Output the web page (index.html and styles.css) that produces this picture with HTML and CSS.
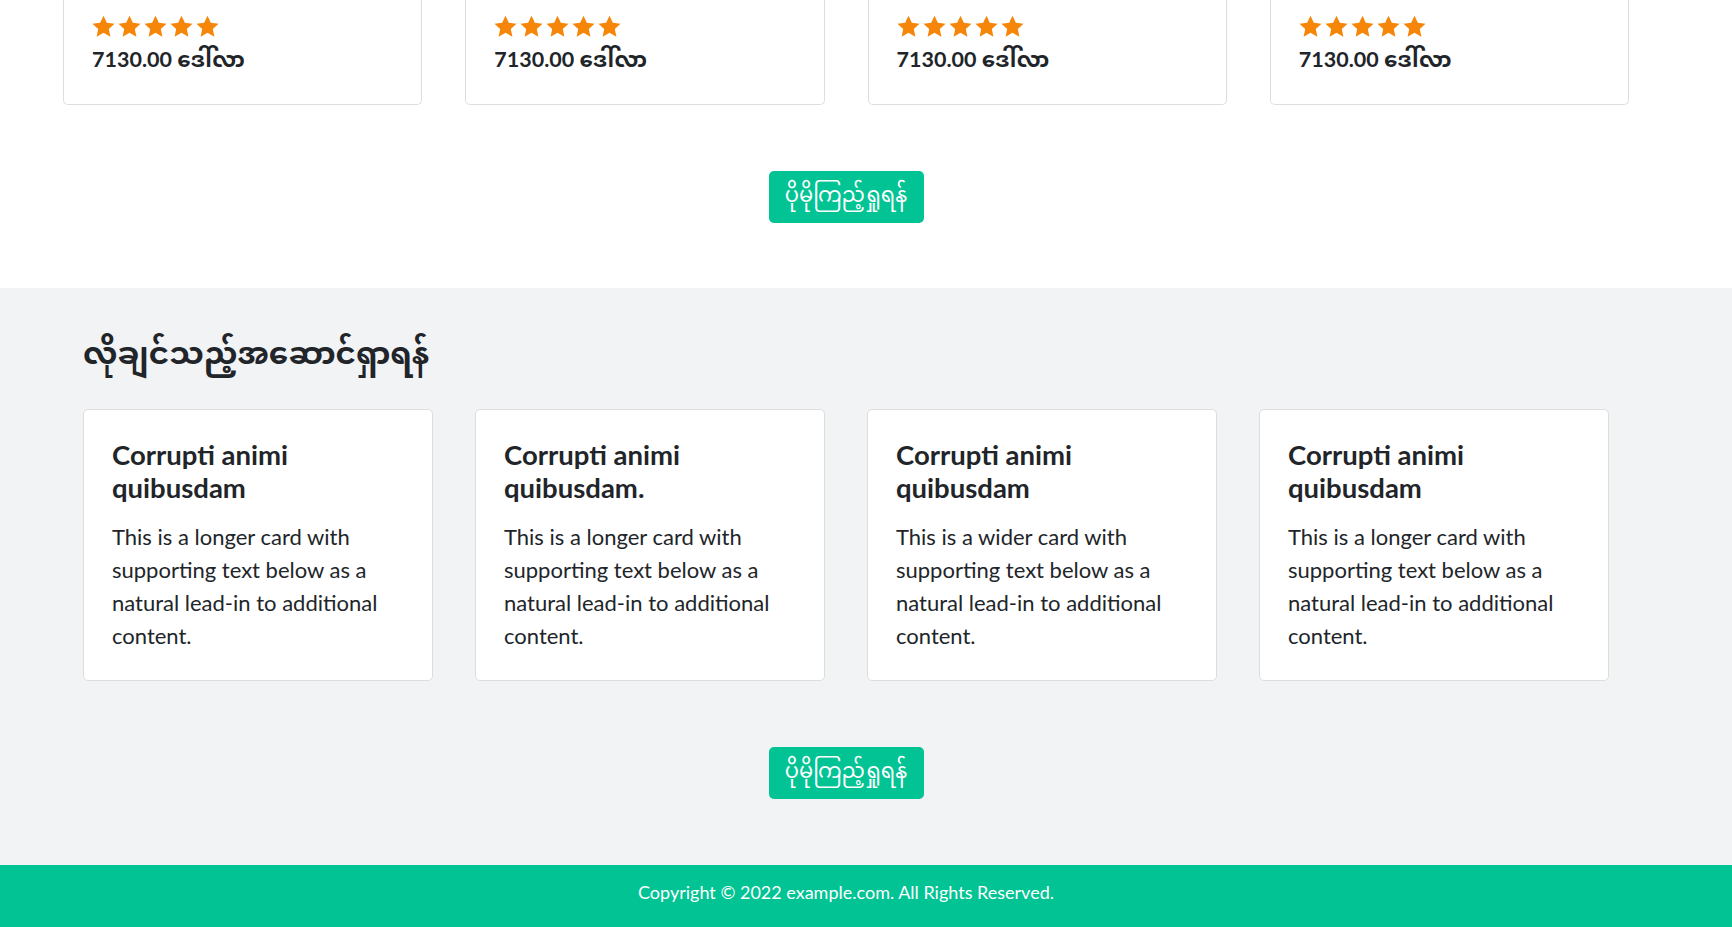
FILE: index.html
```html
<!DOCTYPE html>
<html lang="my">
<head>
<meta charset="utf-8">
<title>Products</title>
<link rel="stylesheet" href="styles.css">
</head>
<body>
<section class="products">
  <div class="product-row">
    <div class="product-card">
      <div class="stars">
        <svg viewBox="0 0 24 24"><path d="M12 1.6l3.2 6.9 7.4.8-5.5 5.1 1.5 7.4L12 18l-6.6 3.8 1.5-7.4-5.5-5.1 7.4-.8z"/></svg>
        <svg viewBox="0 0 24 24"><path d="M12 1.6l3.2 6.9 7.4.8-5.5 5.1 1.5 7.4L12 18l-6.6 3.8 1.5-7.4-5.5-5.1 7.4-.8z"/></svg>
        <svg viewBox="0 0 24 24"><path d="M12 1.6l3.2 6.9 7.4.8-5.5 5.1 1.5 7.4L12 18l-6.6 3.8 1.5-7.4-5.5-5.1 7.4-.8z"/></svg>
        <svg viewBox="0 0 24 24"><path d="M12 1.6l3.2 6.9 7.4.8-5.5 5.1 1.5 7.4L12 18l-6.6 3.8 1.5-7.4-5.5-5.1 7.4-.8z"/></svg>
        <svg viewBox="0 0 24 24"><path d="M12 1.6l3.2 6.9 7.4.8-5.5 5.1 1.5 7.4L12 18l-6.6 3.8 1.5-7.4-5.5-5.1 7.4-.8z"/></svg>
      </div>
      <p class="price">7130.00 ဒေါ်လာ</p>
    </div>
    <div class="product-card">
      <div class="stars">
        <svg viewBox="0 0 24 24"><path d="M12 1.6l3.2 6.9 7.4.8-5.5 5.1 1.5 7.4L12 18l-6.6 3.8 1.5-7.4-5.5-5.1 7.4-.8z"/></svg>
        <svg viewBox="0 0 24 24"><path d="M12 1.6l3.2 6.9 7.4.8-5.5 5.1 1.5 7.4L12 18l-6.6 3.8 1.5-7.4-5.5-5.1 7.4-.8z"/></svg>
        <svg viewBox="0 0 24 24"><path d="M12 1.6l3.2 6.9 7.4.8-5.5 5.1 1.5 7.4L12 18l-6.6 3.8 1.5-7.4-5.5-5.1 7.4-.8z"/></svg>
        <svg viewBox="0 0 24 24"><path d="M12 1.6l3.2 6.9 7.4.8-5.5 5.1 1.5 7.4L12 18l-6.6 3.8 1.5-7.4-5.5-5.1 7.4-.8z"/></svg>
        <svg viewBox="0 0 24 24"><path d="M12 1.6l3.2 6.9 7.4.8-5.5 5.1 1.5 7.4L12 18l-6.6 3.8 1.5-7.4-5.5-5.1 7.4-.8z"/></svg>
      </div>
      <p class="price">7130.00 ဒေါ်လာ</p>
    </div>
    <div class="product-card">
      <div class="stars">
        <svg viewBox="0 0 24 24"><path d="M12 1.6l3.2 6.9 7.4.8-5.5 5.1 1.5 7.4L12 18l-6.6 3.8 1.5-7.4-5.5-5.1 7.4-.8z"/></svg>
        <svg viewBox="0 0 24 24"><path d="M12 1.6l3.2 6.9 7.4.8-5.5 5.1 1.5 7.4L12 18l-6.6 3.8 1.5-7.4-5.5-5.1 7.4-.8z"/></svg>
        <svg viewBox="0 0 24 24"><path d="M12 1.6l3.2 6.9 7.4.8-5.5 5.1 1.5 7.4L12 18l-6.6 3.8 1.5-7.4-5.5-5.1 7.4-.8z"/></svg>
        <svg viewBox="0 0 24 24"><path d="M12 1.6l3.2 6.9 7.4.8-5.5 5.1 1.5 7.4L12 18l-6.6 3.8 1.5-7.4-5.5-5.1 7.4-.8z"/></svg>
        <svg viewBox="0 0 24 24"><path d="M12 1.6l3.2 6.9 7.4.8-5.5 5.1 1.5 7.4L12 18l-6.6 3.8 1.5-7.4-5.5-5.1 7.4-.8z"/></svg>
      </div>
      <p class="price">7130.00 ဒေါ်လာ</p>
    </div>
    <div class="product-card">
      <div class="stars">
        <svg viewBox="0 0 24 24"><path d="M12 1.6l3.2 6.9 7.4.8-5.5 5.1 1.5 7.4L12 18l-6.6 3.8 1.5-7.4-5.5-5.1 7.4-.8z"/></svg>
        <svg viewBox="0 0 24 24"><path d="M12 1.6l3.2 6.9 7.4.8-5.5 5.1 1.5 7.4L12 18l-6.6 3.8 1.5-7.4-5.5-5.1 7.4-.8z"/></svg>
        <svg viewBox="0 0 24 24"><path d="M12 1.6l3.2 6.9 7.4.8-5.5 5.1 1.5 7.4L12 18l-6.6 3.8 1.5-7.4-5.5-5.1 7.4-.8z"/></svg>
        <svg viewBox="0 0 24 24"><path d="M12 1.6l3.2 6.9 7.4.8-5.5 5.1 1.5 7.4L12 18l-6.6 3.8 1.5-7.4-5.5-5.1 7.4-.8z"/></svg>
        <svg viewBox="0 0 24 24"><path d="M12 1.6l3.2 6.9 7.4.8-5.5 5.1 1.5 7.4L12 18l-6.6 3.8 1.5-7.4-5.5-5.1 7.4-.8z"/></svg>
      </div>
      <p class="price">7130.00 ဒေါ်လာ</p>
    </div>
  </div>
  <div class="more"><a class="btn" href="#">ပိုမိုကြည့်ရှုရန်</a></div>
</section>

<section class="wish">
  <h2 class="wish-title">လိုချင်သည့်အဆောင်ရှာရန်</h2>
  <div class="card-row">
    <div class="info-card">
      <h5 class="info-title">Corrupti animi quibusdam</h5>
      <p class="info-text">This is a longer card with supporting text below as a natural lead-in to additional content.</p>
    </div>
    <div class="info-card">
      <h5 class="info-title">Corrupti animi quibusdam.</h5>
      <p class="info-text">This is a longer card with supporting text below as a natural lead-in to additional content.</p>
    </div>
    <div class="info-card">
      <h5 class="info-title">Corrupti animi quibusdam</h5>
      <p class="info-text">This is a wider card with supporting text below as a natural lead-in to additional content.</p>
    </div>
    <div class="info-card">
      <h5 class="info-title">Corrupti animi quibusdam</h5>
      <p class="info-text">This is a longer card with supporting text below as a natural lead-in to additional content.</p>
    </div>
  </div>
  <div class="more"><a class="btn" href="#">ပိုမိုကြည့်ရှုရန်</a></div>
</section>

<footer class="footer">Copyright © 2022 example.com. All Rights Reserved.</footer>
</body>
</html>
```

FILE: styles.css
```css
* { box-sizing: border-box; }

body {
  margin: 0;
  font-family: "Lato", "Noto Sans Myanmar", "Padauk", "Myanmar Text", "Noto Sans", sans-serif;
  color: #212529;
  background: #fff;
}

.products {
  height: 288px;
  padding: 0 103px 0 63px;
}

.product-row {
  display: flex;
  gap: 43px;
}

.product-card {
  width: 360px;
  height: 105px;
  border: 1px solid #dedede;
  border-top: none;
  border-radius: 0 0 5px 5px;
  padding: 14px 28px 0 27px;
}

.stars {
  display: flex;
  gap: 1px;
}

.stars svg {
  width: 25px;
  height: 25px;
  fill: #f5860a;
}

.price {
  margin: 5px 0 0 1px;
  font-size: 21.5px;
  font-weight: 700;
  line-height: 30px;
}

.more {
  display: flex;
  justify-content: center;
}

.products .more { padding-top: 66px; }

.btn {
  display: flex;
  align-items: center;
  justify-content: center;
  width: 155px;
  height: 52px;
  background: #01c393;
  color: #fff;
  border-radius: 5px;
  text-decoration: none;
  font-size: 21px;
}

.wish {
  background: #f2f3f5;
  padding: 34px 123px 66px 83px;
}

.wish-title {
  margin: 0 0 27px;
  font-size: 31px;
  line-height: 60px;
  font-weight: 700;
}

.card-row {
  display: flex;
  gap: 42px;
}

.info-card {
  width: 350px;
  height: 272px;
  background: #fff;
  border: 1px solid #dedede;
  border-radius: 5px;
  padding: 28px 28px 0;
}

.info-title {
  margin: 0 0 16px;
  font-size: 27.5px;
  line-height: 33px;
  font-weight: 700;
}

.info-text {
  margin: 0;
  font-size: 22px;
  line-height: 33px;
}

.wish .more { padding-top: 66px; }

.footer {
  height: 62px;
  background: #01c393;
  color: #fff;
  display: flex;
  align-items: center;
  justify-content: center;
  font-size: 18px;
  padding: 0 103px 8px 63px;
}
```
